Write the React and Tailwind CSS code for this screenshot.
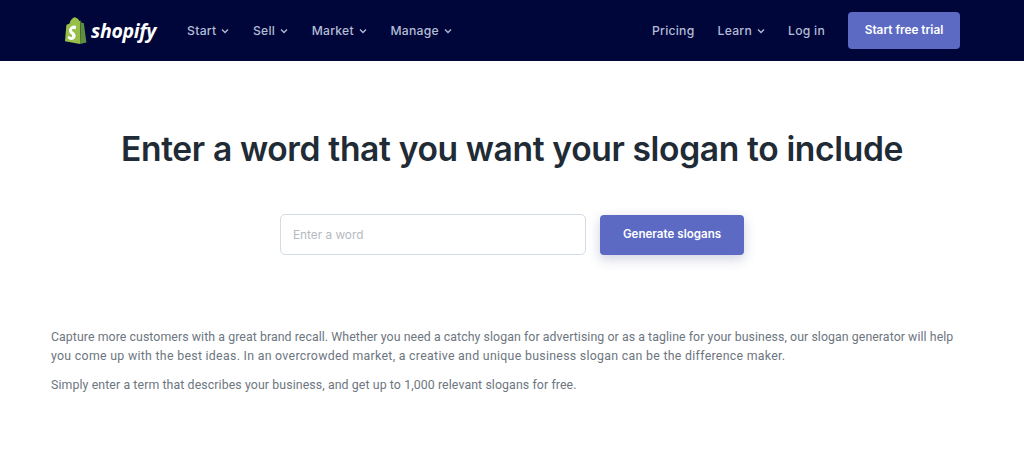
import React from "react";

const Chevron = () => (
  <svg width="8" height="6" viewBox="0 0 8 6" fill="none" stroke="currentColor" strokeWidth="1.3" className="ml-[5px]">
    <path d="M1 1.5 L4 4.5 L7 1.5" />
  </svg>
);

const Item = ({ children, chevron }) => (
  <a className="flex items-center pt-[1px] text-[12.2px] leading-none font-medium tracking-[0.25px] text-[#b4bcd6]">
    {children}
    {chevron && <Chevron />}
  </a>
);

const Logo = () => (
  <div className="flex items-center gap-[4px]">
    <svg width="22" height="28" viewBox="0 0 22 28">
      <path d="M15.5 3.6 L14.2 4 C13.7 2.4 12.9 1.4 11.6 1.2 C10.6 0 9.2 0.2 8 1 C6 2.3 5 4.6 4.6 6.6 L2.2 7.4 C1.5 7.6 1.4 7.7 1.3 8.4 L0 24.2 L15 27 Z" fill="#95bf47" />
      <path d="M15.8 3.6 L15 27 L21.5 25.4 C21.5 25.4 18.9 6.6 18.8 6.3 C18.7 6 18.5 5.9 18.3 5.9 L16.6 5.8 Z" fill="#5e8e3e" />
      <path d="M11.2 9.8 L10.4 12.4 C10.4 12.4 9.5 12 8.5 12 C6.9 12 6.8 13 6.8 13.3 C6.8 14.7 10.6 15.2 10.6 18.6 C10.6 21.2 8.9 22.9 6.7 22.9 C4 22.9 2.7 21.2 2.7 21.2 L3.4 18.8 C3.4 18.8 4.8 20 6 20 C6.8 20 7.1 19.4 7.1 18.9 C7.1 17 4 16.9 4 13.8 C4 11.2 5.9 8.6 9.7 8.6 C10.6 9 11.2 9.8 11.2 9.8 Z" fill="#fff" />
      <path d="M6 6 C6.6 3.6 8 2 9.6 1.6 M9.5 5.4 C9.6 3.6 10.2 2.2 11.5 1.6 C12.4 2.2 12.7 3.2 12.8 4.4" fill="none" stroke="#95bf47" strokeWidth="1" />
    </svg>
    <span className="text-[19.5px] leading-none font-bold italic text-white tracking-[-0.3px] font-['Open_Sans',sans-serif]">shopify</span>
  </div>
);

export default function App() {
  return (
    <div className="min-h-[472px] w-[1024px] overflow-hidden bg-white font-['Inter',sans-serif]">
      <header className="flex h-[61px] items-center justify-between bg-[#000639] pl-[65px] pr-[64px]">
        <div className="flex items-center">
          <Logo />
          <nav className="ml-[31px] flex items-center gap-[23.5px]">
            <Item chevron>Start</Item>
            <Item chevron>Sell</Item>
            <Item chevron>Market</Item>
            <Item chevron>Manage</Item>
          </nav>
        </div>
        <div className="flex items-center">
          <nav className="flex items-center gap-[23px]">
            <Item>Pricing</Item>
            <Item chevron>Learn</Item>
            <Item>Log in</Item>
          </nav>
          <button className="ml-[23px] flex h-[37px] w-[112px] items-center justify-center rounded-[4px] bg-[#5c6ac4] text-[11.8px] font-semibold text-white">
            Start free trial
          </button>
        </div>
      </header>

      <main>
        <h1 className="mt-[67px] text-center text-[33.6px] leading-[42px] font-semibold tracking-[-0.35px] text-[#212b36]">
          Enter a word that you want your slogan to include
        </h1>
        <div className="mt-[44px] flex items-center justify-center gap-[14px]">
          <div className="flex h-[41px] w-[306px] items-center rounded-[5px] border border-[#d3dbe6] bg-white px-[12px] pt-[2px] text-[11.8px] text-[#b5bac1]">
            Enter a word
          </div>
          <button className="flex h-[40px] w-[144px] items-center justify-center rounded-[4px] bg-[#5c6ac4] pt-[1px] text-[11.6px] font-semibold text-white shadow-[0_4px_12px_rgba(60,70,130,0.25)]">
            Generate slogans
          </button>
        </div>
        <div className="mt-[73px] px-[51px] font-['Roboto',sans-serif] text-[#6d7680]">
          <p className="w-[925px] text-[12.33px] leading-[19px] tracking-[0.07px]">
            Capture more customers with a great brand recall. Whether you need a catchy slogan for advertising or as a tagline for your business, our slogan generator will help <span className="tracking-[0.3px]">you come up with the best ideas. In an overcrowded market, a creative and unique business slogan can be the difference maker.</span>
          </p>
          <p className="mt-[10px] text-[12.33px] leading-[19px] tracking-[0.1px]">
            Simply enter a term that describes your business, and get up to 1,000 relevant slogans for free.
          </p>
        </div>
      </main>
    </div>
  );
}
